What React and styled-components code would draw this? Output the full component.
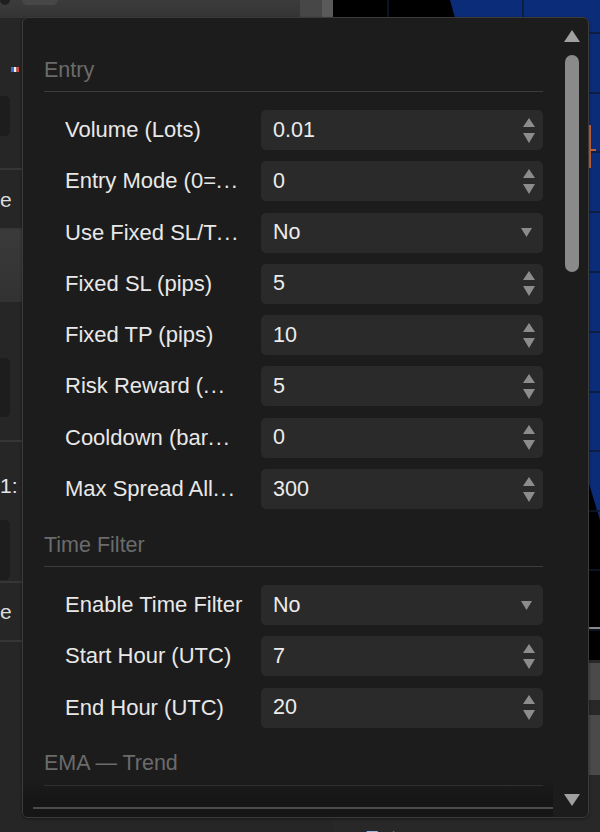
import styled, { createGlobalStyle } from 'styled-components';

const GlobalStyle = createGlobalStyle`
  html, body {
    margin: 0;
    padding: 0;
    background: #262626;
  }
  body {
    font-family: "Liberation Sans", Arial, sans-serif;
  }
`

// ---- background app (mostly hidden behind the popup) ----
const Screen = styled.div`
  position: relative;
  width: 600px;
  height: 832px;
  overflow: hidden;
  display: grid;
  grid-template-columns: 300px 33px 1fr;
  background: #262626;
`
const SidePanel = styled.div`
  display: flex;
  flex-direction: column;
  background: #262626;
`
const Toolbar = styled.div`
  display: flex;
  align-items: flex-start;
  gap: 12px;
  height: 18px;
  background: linear-gradient(#3c3c3c, #343434);
`
const ToolTab = styled.div`
  width: ${p => p.$w}px;
  height: 5px;
  border-radius: 0 0 5px 5px;
  background: ${p => p.$bg};
`
const PanelRow = styled.div`
  display: flex;
  flex-direction: column;
  justify-content: ${p => p.$justify || 'center'};
  gap: 24px;
  height: ${p => p.$h}px;
  padding: ${p => p.$pad || '0'};
  box-sizing: border-box;
  border-bottom: ${p => (p.$line ? '2px solid #363636' : 'none')};
  background: ${p => p.$bg || 'transparent'};
  color: #d9d9d9;
  font-size: 21px;
`
const FieldStub = styled.div`
  width: 10px;
  height: ${p => p.$h}px;
  border-radius: 0 5px 5px 0;
  background: #1d1d1d;
`
const Fragment = styled.span`
  line-height: 1;
  color: ${p => p.$color || '#dcdcdc'};
`
const Splitter = styled.div`
  display: grid;
  grid-template-columns: 22px 11px;
  grid-template-rows: 18px 1fr 14px;
  background: #262626;
`
const SplitTop = styled.div`
  grid-column: 1 / 3;
  background: linear-gradient(90deg, #474747 0 66%, #5a5a5a 66% 100%);
`
const SplitBar = styled.div`
  grid-column: 2;
  grid-row: 3;
  margin-right: 1px;
  background: #585858;
`
const ChartColumn = styled.div`
  display: flex;
  flex-direction: column;
`
const ChartArea = styled.svg`
  display: block;
  width: 267px;
  height: 660px;
  background: #000;
`
const BottomPanel = styled.div`
  display: flex;
  flex-direction: column;
  flex: 1;
  background: #282828;
`
const BottomButtons = styled.div`
  display: flex;
  flex-direction: column;
  align-items: flex-end;
  gap: 15px;
  padding-top: 3px;
`
const GreyButton = styled.div`
  width: 120px;
  height: ${p => p.$h}px;
  background: #4a4a4a;
`
const BottomTab = styled.div`
  padding: 52px 0 0 32px;
  font-size: 21px;
  color: #9fb6d9;
  line-height: 1;
`

// ---- parameters popup ----
const Popup = styled.div`
  position: absolute;
  left: 22px;
  top: 17px;
  width: 567px;
  height: 801px;
  box-sizing: border-box;
  display: grid;
  grid-template-columns: 1fr 35px;
  background: #1c1c1c;
  border: 1px solid #3b3b3b;
  border-radius: 6px;
  box-shadow: 0 1px 3px rgba(0, 0, 0, 0.4);
  overflow: hidden;
`
const ContentColumn = styled.div`
  display: flex;
  flex-direction: column;
  min-width: 0;
`
const Viewport = styled.div`
  position: relative;
  height: 782px;
  overflow: hidden;
  padding: 31px 10px 0 21px;
  box-sizing: border-box;

  &::after {
    content: '';
    position: absolute;
    left: 0;
    right: 0;
    bottom: 0;
    height: 22px;
    background: linear-gradient(rgba(20, 20, 20, 0), #161616);
  }
`
const Section = styled.div`
  display: flex;
  flex-direction: column;
  margin-bottom: 15px;
`
const SectionTitle = styled.div`
  display: flex;
  align-items: center;
  height: 42px;
  border-bottom: 1px solid #3c3c3c;
  margin-bottom: 18px;
  font-size: 21.5px;
  color: #6b6b6b;
`
const Rows = styled.div`
  display: flex;
  flex-direction: column;
  gap: 11.3px;
  padding-left: 21px;
`
const Row = styled.div`
  display: grid;
  grid-template-columns: 196px 1fr;
  align-items: center;
  height: 40px;
`
const Label = styled.span`
  font-size: 22px;
  color: #e8e8e8;
  white-space: nowrap;
  overflow: hidden;
`
const Dots = styled.span`
  letter-spacing: 1.5px;
`
const Field = styled.div`
  display: flex;
  align-items: center;
  justify-content: space-between;
  height: 40px;
  padding: 0 ${p => (p.$select ? 11 : 8)}px 0 12px;
  box-sizing: border-box;
  border-radius: 5px;
  background: #2a2a2a;
  font-size: 21.5px;
  color: #ececec;
`
const HScroll = styled.div`
  height: 17px;
  padding: 7px 0 0 10px;
  box-sizing: border-box;
  background: #161616;

  &::before {
    content: '';
    display: block;
    height: 2px;
    background: #4b4b4b;
  }
`
const ScrollColumn = styled.div`
  display: flex;
  flex-direction: column;
  align-items: center;
  padding: 12px 0 11px 3px;
`
const Thumb = styled.div`
  width: 14px;
  height: 217px;
  margin-top: 13px;
  border-radius: 7px;
  background: #8a8a8a;
`
const Spacer = styled.div`
  flex: 1;
`

const sections = [
  {
    title: 'Entry',
    rows: [
      { label: 'Volume (Lots)', value: '0.01' },
      { label: 'Entry Mode (0=', cut: true, value: '0' },
      { label: 'Use Fixed SL/T', cut: true, value: 'No', select: true },
      { label: 'Fixed SL (pips)', value: '5' },
      { label: 'Fixed TP (pips)', value: '10' },
      { label: 'Risk Reward (', cut: true, value: '5' },
      { label: 'Cooldown (bar', cut: true, value: '0' },
      { label: 'Max Spread All', cut: true, value: '300' },
    ],
  },
  {
    title: 'Time Filter',
    rows: [
      { label: 'Enable Time Filter', value: 'No', select: true },
      { label: 'Start Hour (UTC)', value: '7' },
      { label: 'End Hour (UTC)', value: '20' },
    ],
  },
  {
    title: 'EMA — Trend',
    rows: [],
  },
];

const gridLines = [33, 93, 152, 212, 272, 332, 392, 451, 511, 570, 630];

function SpinArrows() {
  return (
    <svg width="12" height="25" viewBox="0 0 12 25">
      <polygon points="6,0 12,9 0,9" fill="#8c8c8c" />
      <polygon points="0,15 12,15 6,25" fill="#8c8c8c" />
    </svg>
  );
}

function DropArrow() {
  return (
    <svg width="11" height="9" viewBox="0 0 11 9">
      <polygon points="0,0 11,0 5.5,9" fill="#8c8c8c" />
    </svg>
  );
}

function ScrollArrow({ down }) {
  return (
    <svg width="16" height="12" viewBox="0 0 16 12">
      <polygon points={down ? '0,0 16,0 8,12' : '8,0 16,12 0,12'} fill="#a0a0a0" />
    </svg>
  );
}

function Flag() {
  return (
    <svg width="8" height="5" viewBox="0 0 8 5" style={{ marginLeft: '11px' }}>
      <rect x="0" y="0" width="3" height="5" fill="#3b6fd6" />
      <rect x="3" y="0" width="2.5" height="5" fill="#f2f2f2" />
      <rect x="5.5" y="0" width="2.5" height="5" fill="#d4453a" />
    </svg>
  );
}

export default function App() {
  return (
    <>
      <GlobalStyle />
      <Screen>
        <SidePanel>
          <Toolbar>
            <ToolTab $w={10} $bg="#1f1f1f" />
            <ToolTab $w={36} $bg="#474747" />
          </Toolbar>
          <PanelRow $h={152} $line $justify="flex-start" $pad="49px 0 0">
            <Flag />
            <FieldStub $h={40} />
          </PanelRow>
          <PanelRow $h={60} $line>
            <Fragment>e</Fragment>
          </PanelRow>
          <PanelRow $h={72} $bg="linear-gradient(#3a3a3a, #323232)" />
          <PanelRow $h={140} $line $justify="flex-start" $pad="56px 0 0">
            <FieldStub $h={59} />
          </PanelRow>
          <PanelRow $h={141} $line $justify="flex-start" $pad="33px 0 0">
            <Fragment $color="#e4e4f0">1:</Fragment>
            <FieldStub $h={60} />
          </PanelRow>
          <PanelRow $h={59} $line>
            <Fragment>e</Fragment>
          </PanelRow>
        </SidePanel>

        <Splitter>
          <SplitTop />
          <SplitBar />
        </Splitter>

        <ChartColumn>
          <ChartArea viewBox="0 0 267 660">
            <path d="M117,0 Q200,300 267,520 L267,0 Z" fill="#0b2c78" />
            {gridLines.map(y => (
              <line key={y} x1="0" y1={y} x2="267" y2={y} stroke="#111a30" strokeWidth="1.5" />
            ))}
            <line x1="55" y1="0" x2="55" y2="660" stroke="#111a30" strokeWidth="1.5" />
            <line x1="190" y1="0" x2="190" y2="660" stroke="#111a30" strokeWidth="1.5" />
            <line x1="257" y1="125" x2="257" y2="168" stroke="#c0603a" strokeWidth="2" />
            <line x1="257" y1="150" x2="263" y2="150" stroke="#c0603a" strokeWidth="2" />
            <line x1="245" y1="628" x2="267" y2="628" stroke="#b8b8b8" strokeWidth="1.5" />
          </ChartArea>
          <BottomPanel>
            <BottomButtons>
              <GreyButton $h={37} />
              <GreyButton $h={60} />
            </BottomButtons>
            <BottomTab>Entry</BottomTab>
          </BottomPanel>
        </ChartColumn>

        <Popup>
          <ContentColumn>
            <Viewport>
              {sections.map(section => (
                <Section key={section.title}>
                  <SectionTitle>{section.title}</SectionTitle>
                  <Rows>
                    {section.rows.map(row => (
                      <Row key={row.label}>
                        <Label>
                          {row.label}
                          {row.cut && <Dots>...</Dots>}
                        </Label>
                        <Field $select={row.select}>
                          <span>{row.value}</span>
                          {row.select ? <DropArrow /> : <SpinArrows />}
                        </Field>
                      </Row>
                    ))}
                  </Rows>
                </Section>
              ))}
            </Viewport>
            <HScroll />
          </ContentColumn>
          <ScrollColumn>
            <ScrollArrow />
            <Thumb />
            <Spacer />
            <ScrollArrow down />
          </ScrollColumn>
        </Popup>
      </Screen>
    </>
  );
}
